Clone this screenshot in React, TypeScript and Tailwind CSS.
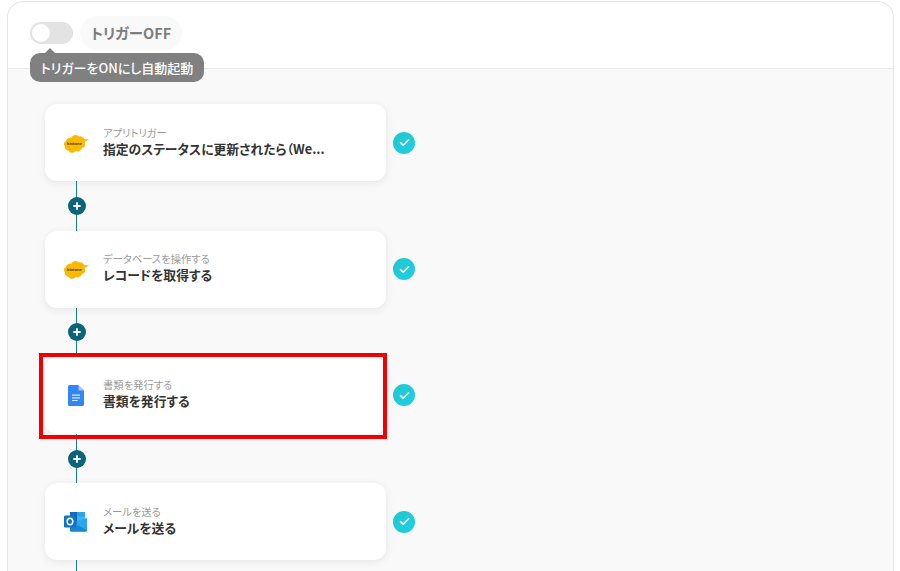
const font = { fontFamily: '"Noto Sans CJK JP", "Noto Sans", sans-serif' };

function KintoneIcon() {
  return (
    <svg viewBox="0 0 28 22" className="h-[22px] w-[28px]">
      <path
        fill="#fdb900"
        d="M4 9C4.500 6 8 5 9.500 5.500 11 2.500 15 2 17 4.500 19 4 21.500 5 22 7L27 7.500 22.500 10C24 13 22.500 16 20 16 19 19 15.500 20 14 19 12 21.500 7.500 21.500 6.500 18.500 4 18.500 2 16 3 14 1 12.500 2 10 4 9Z"
      />
      <text x="12.500" y="13" textAnchor="middle" fontSize="4.200" fontWeight="700" fill="#3d2f00" fontFamily="Liberation Sans, sans-serif">
        kintone
      </text>
    </svg>
  );
}

function DocsIcon() {
  return (
    <svg viewBox="0 0 16 21" className="h-[21px] w-4">
      <path fill="#3086f6" d="M1.500 0H10.500L16 5.500V19.500a1.500 1.500 0 0 1-1.500 1.500H1.500A1.500 1.500 0 0 1 0 19.500V1.500A1.500 1.500 0 0 1 1.500 0z" />
      <path fill="#a9c8fb" d="M10.500 0L16 5.500H11.500a1 1 0 0 1-1-1z" />
      <path fill="#dbe8fd" d="M4 9.500h8v1.200H4zM4 12.200h8v1.200H4zM4 14.900h5.700v1.200H4z" />
    </svg>
  );
}

function OutlookIcon() {
  return (
    <svg viewBox="0 0 23 21" className="h-[21px] w-[23px]">
      <path fill="#0f6cbd" d="M6 1h15v9H6z" />
      <path fill="#2ea3e6" d="M13 1h8v9h-8z" />
      <path fill="#0a5ea8" d="M6 5.500h7V10H6z" />
      <path fill="#35b8f1" d="M13 5.500h8V10h-8z" />
      <path fill="#1787d4" d="M6 10h15l2 0v9.500a1.300 1.300 0 0 1-1.300 1.300H7.300A1.300 1.300 0 0 1 6 19.500z" />
      <path fill="#28a8ea" d="M13 10l10-3v12.500L13 14z" />
      <rect x="0" y="4.500" width="12" height="12" rx="1.300" fill="#1272c4" />
      <ellipse cx="6" cy="10.500" rx="2.800" ry="3.300" fill="none" stroke="#fff" strokeWidth="1.500" />
    </svg>
  );
}

function CheckBadge() {
  return (
    <div className="flex h-[22px] w-[22px] shrink-0 items-center justify-center rounded-full bg-gradient-to-br from-[#1fc7cf] to-[#20cfe4]">
      <svg viewBox="0 0 12 10" className="h-[9px] w-[11px]" fill="none" stroke="#fff" strokeWidth="1.800" strokeLinecap="round" strokeLinejoin="round">
        <path d="M1.500 5.200L4.500 8l6-6" />
      </svg>
    </div>
  );
}

function Connector({ last }: { last?: boolean }) {
  return (
    <div className={`ml-[31px] flex w-px flex-col items-center bg-[#1b7f94] ${last ? "h-[12px]" : "h-[49.330px] justify-center"}`}>
      {!last && (
        <div className="flex h-[18px] w-[18px] shrink-0 items-center justify-center rounded-full bg-[#0d6378]">
          <svg viewBox="0 0 8 8" className="h-2 w-2" stroke="#fff" strokeWidth="1.800" strokeLinecap="round">
            <path d="M4 1v6M1 4h6" />
          </svg>
        </div>
      )}
    </div>
  );
}

const steps = [
  { label: "アプリトリガー", title: "指定のステータスに更新されたら（We...", icon: <KintoneIcon /> },
  { label: "データベースを操作する", title: "レコードを取得する", icon: <KintoneIcon /> },
  { label: "書類を発行する", title: "書類を発行する", icon: <DocsIcon />, marked: true },
  { label: "メールを送る", title: "メールを送る", icon: <OutlookIcon /> },
];

export default function App() {
  return (
    <div className="h-[571px] overflow-hidden bg-white pl-[7px] pr-[6px] pt-px [font-feature-settings:'palt']" style={font}>
      <div className="h-[590px] rounded-t-2xl border border-[#e6e6e6] bg-[#f9f9f9]">
        <div className="relative flex h-[67px] items-start gap-[7px] rounded-t-2xl border-b border-[#e8e8e8] bg-white pl-[22px] pt-[14px]">
          <div className="mt-[6px] flex h-[22px] w-[43px] items-center rounded-full bg-[#e3e3e3] pl-[2px]">
            <div className="h-[18px] w-[18px] rounded-full bg-white" />
          </div>
          <div className="flex h-[34px] w-[102px] items-center justify-center rounded-full bg-[#f9f9f9] text-[14.500px] font-bold text-[#7d7d7d]">
            トリガーOFF
          </div>
          <div className="absolute left-[22px] top-[51px] z-10 flex h-[29px] w-[174px] items-center justify-center rounded-[10px] bg-[#808080] text-[13px] font-medium text-white">
            <span className="absolute left-[15px] top-[-5px] h-0 w-0 border-x-[5px] border-b-[5px] border-x-transparent border-b-[#808080]" />
            トリガーをONにし自動起動
          </div>
        </div>

        <div className="flex flex-col pl-[37px] pt-[35.330px]">
          {steps.map((step, i) => (
            <div key={i}>
              <div className="flex items-center gap-[7px]">
                <div className="relative flex h-[77px] w-[341px] items-center rounded-xl bg-white shadow-[0_2px_8px_rgba(0,0,0,0.08)]">
                  <div className="flex w-[58px] shrink-0 justify-center pl-[3px]">{step.icon}</div>
                  <div className="mt-[-4px] flex flex-col">
                    <span className="text-[10.300px] leading-[15px] text-[#9a9a9a]">{step.label}</span>
                    <span className="text-[12.800px] font-semibold leading-[17px] text-[#333333]">{step.title}</span>
                  </div>
                  {step.marked && (
                    <div className="absolute bottom-[-5px] left-[-6px] right-[-1px] top-[-4px] border-4 border-[#f20000]" />
                  )}
                </div>
                <CheckBadge />
              </div>
              <Connector last={i === steps.length - 1} />
            </div>
          ))}
        </div>
      </div>
    </div>
  );
}
